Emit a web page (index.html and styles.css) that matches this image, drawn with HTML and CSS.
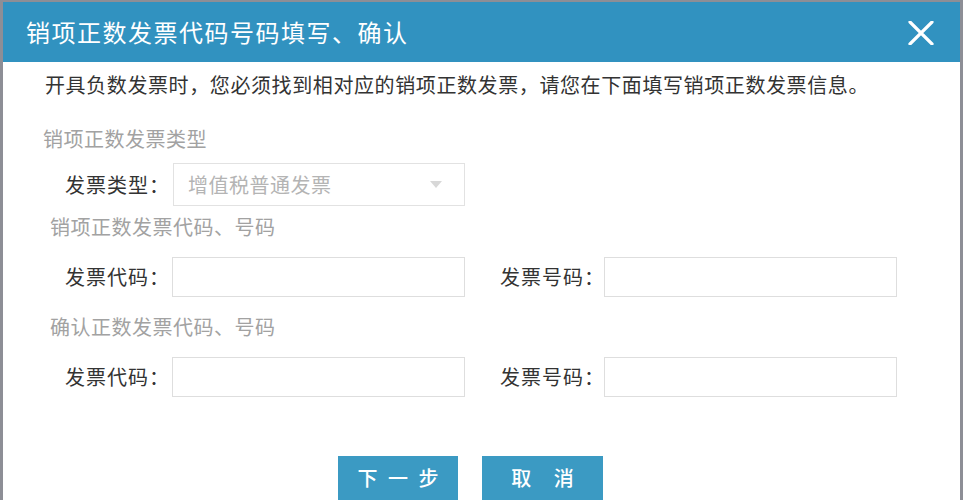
FILE: index.html
```html
<!DOCTYPE html>
<html lang="zh-CN">
<head>
<meta charset="utf-8">
<title>销项正数发票代码号码填写、确认</title>
<link rel="stylesheet" href="styles.css">
</head>
<body>
<div class="dialog">
  <div class="header">
    <span class="title">销项正数发票代码号码填写、确认</span>
    <svg class="close" width="28" height="24" viewBox="0 0 28 24"><path d="M3 1 L25 23 M25 1 L3 23" stroke="#fff" stroke-width="3.2" stroke-linecap="round"/></svg>
  </div>
  <div class="content">
    <p class="intro">开具负数发票时，您必须找到相对应的销项正数发票，请您在下面填写销项正数发票信息。</p>
    <div class="section-title first">销项正数发票类型</div>
    <div class="row row-first">
      <span class="label">发票类型：</span>
      <div class="select">
        <span class="placeholder">增值税普通发票</span>
        <span class="arrow"></span>
      </div>
    </div>
    <div class="section-title second">销项正数发票代码、号码</div>
    <div class="row">
      <span class="label">发票代码：</span>
      <div class="input"></div>
      <span class="label2">发票号码：</span>
      <div class="input input2"></div>
    </div>
    <div class="section-title">确认正数发票代码、号码</div>
    <div class="row">
      <span class="label">发票代码：</span>
      <div class="input"></div>
      <span class="label2">发票号码：</span>
      <div class="input input2"></div>
    </div>
    <div class="buttons">
      <div class="btn">下 一 步</div>
      <div class="btn btn-wide">取 消</div>
    </div>
  </div>
</div>
</body>
</html>
```
FILE: styles.css
```css
html, body {
  margin: 0;
  padding: 0;
  background: #fff;
  overflow: hidden;
}
body {
  font-family: "Noto Sans CJK SC", "Noto Sans", sans-serif;
}
.dialog {
  width: 957px;
  height: 498px;
  overflow: hidden;
  border-left: 3px solid #8d8e96;
  border-right: 3px solid #8d8e96;
  border-top: 2px solid #8d8e96;
  background: #fff;
}
.header {
  height: 60px;
  background: #3192c0;
  display: flex;
  align-items: center;
  justify-content: space-between;
  padding: 0 25px 0 23px;
}
.title {
  color: #fff;
  font-size: 24px;
  letter-spacing: 1.5px;
  line-height: 30px;
}
.close {
  display: block;
  margin-top: 1px;
}
.content {
  padding-left: 40px;
}
.intro {
  margin: 8px 0 0 2px;
  font-size: 20px;
  line-height: 30px;
  color: #333;
  letter-spacing: 0.6px;
  white-space: nowrap;
}
.section-title {
  font-size: 20px;
  line-height: 30px;
  color: #a2a2a2;
  letter-spacing: 0.5px;
  margin-top: 15px;
  padding-left: 7px;
}
.section-title.first {
  margin-top: 24px;
  padding-left: 0;
}
.section-title.second {
  margin-top: 6px;
}
.row {
  display: flex;
  align-items: center;
  margin-top: 15px;
}
.row-first {
  margin-top: 9px;
}
.label {
  width: 127px;
  text-align: right;
  font-size: 20px;
  color: #333;
  letter-spacing: 1px;
  line-height: 30px;
  white-space: nowrap;
  flex: none;
}
.label2 {
  margin-left: 35px;
  width: 104px;
  font-size: 20px;
  color: #333;
  letter-spacing: 1px;
  line-height: 30px;
  white-space: nowrap;
  flex: none;
}
.input {
  margin-left: 2px;
  width: 291px;
  height: 38px;
  border: 1px solid #dedede;
  background: #fff;
  flex: none;
}
.input2 {
  margin-left: 0;
}
.select {
  margin-left: 3px;
  width: 292px;
  height: 43px;
  border: 1px solid #e2e2e2;
  display: flex;
  align-items: center;
  justify-content: space-between;
  padding: 0 22px 0 14px;
  box-sizing: border-box;
  flex: none;
}
.placeholder {
  font-size: 20px;
  color: #b4b4b4;
  letter-spacing: 0.5px;
}
.arrow {
  width: 0;
  height: 0;
  border-left: 6px solid transparent;
  border-right: 6px solid transparent;
  border-top: 7px solid #d8d8d8;
}
.buttons {
  display: flex;
  gap: 24px;
  margin-top: 59px;
  padding-left: 295px;
}
.btn {
  width: 120px;
  height: 44px;
  background: #3b9ac3;
  color: #fff;
  font-size: 20px;
  font-weight: 500;
  line-height: 44px;
  text-align: center;
  letter-spacing: 3px;
  text-indent: 3px;
}
.btn-wide {
  width: 121px;
  letter-spacing: 9px;
  text-indent: 9px;
}
```
